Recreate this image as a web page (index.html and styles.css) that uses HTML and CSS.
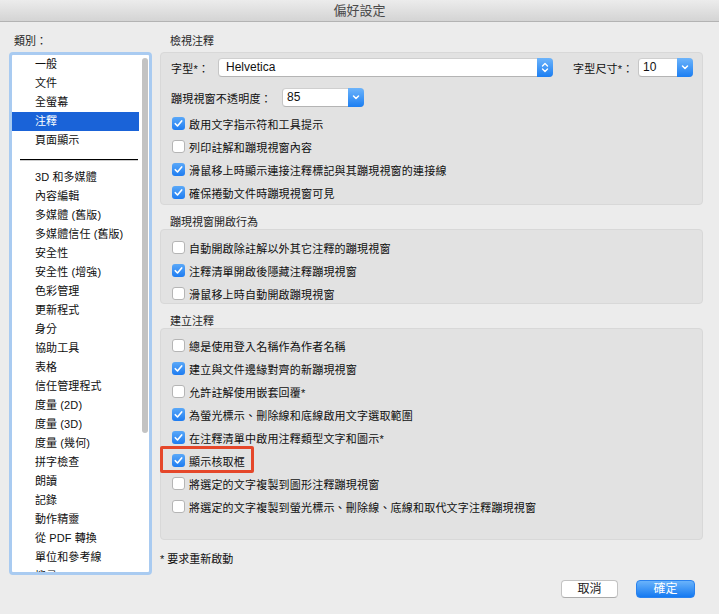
FILE: index.html
```html
<!DOCTYPE html>
<html lang="zh-Hant">
<head>
<meta charset="utf-8">
<title>偏好設定</title>
<link rel="stylesheet" href="styles.css">
</head>
<body>
<div class="window">
  <header class="titlebar">偏好設定</header>
  <div class="content">
    <aside class="sidebar">
      <div class="side-label">類別：</div>
      <div class="list">
        <ul class="items">
          <li>一般</li>
          <li>文件</li>
          <li>全螢幕</li>
          <li class="selected">注釋</li>
          <li>頁面顯示</li>
          <li class="sep"><span class="sep-line"></span></li>
          <li>3D 和多媒體</li>
          <li>內容編輯</li>
          <li>多媒體 (舊版)</li>
          <li>多媒體信任 (舊版)</li>
          <li>安全性</li>
          <li>安全性 (增強)</li>
          <li>色彩管理</li>
          <li>更新程式</li>
          <li>身分</li>
          <li>協助工具</li>
          <li>表格</li>
          <li>信任管理程式</li>
          <li>度量 (2D)</li>
          <li>度量 (3D)</li>
          <li>度量 (幾何)</li>
          <li>拼字檢查</li>
          <li>朗讀</li>
          <li>記錄</li>
          <li>動作精靈</li>
          <li>從 PDF 轉換</li>
          <li>單位和參考線</li>
          <li>搜尋</li>
        </ul>
        <div class="scrollbar"><div class="thumb"></div></div>
      </div>
    </aside>

    <main class="panel">
      <div class="section-title first">檢視注釋</div>
      <section class="group g1">
        <div class="field-row">
          <span class="lbl lbl-font">字型*：</span>
          <div class="select sel-font">
            <span class="val">Helvetica</span>
            <span class="sbtn">
              <svg width="16" height="19" viewBox="0 0 16 19"><path d="M5.5 8 L8 5.5 L10.5 8 M5.5 11 L8 13.5 L10.5 11" fill="none" stroke="#fff" stroke-width="1.4" stroke-linecap="round" stroke-linejoin="round"/></svg>
            </span>
          </div>
          <span class="lbl lbl-size">字型尺寸*：</span>
          <div class="select sel-size">
            <span class="val">10</span>
            <span class="sbtn">
              <svg width="16" height="19" viewBox="0 0 16 19"><path d="M5.5 8 L8 10.5 L10.5 8" fill="none" stroke="#fff" stroke-width="1.5" stroke-linecap="round" stroke-linejoin="round"/></svg>
            </span>
          </div>
        </div>
        <div class="field-row row2">
          <span class="lbl lbl-opacity">蹦現視窗不透明度：</span>
          <div class="select sel-opacity">
            <span class="val">85</span>
            <span class="sbtn">
              <svg width="16" height="19" viewBox="0 0 16 19"><path d="M5.5 8 L8 10.5 L10.5 8" fill="none" stroke="#fff" stroke-width="1.5" stroke-linecap="round" stroke-linejoin="round"/></svg>
            </span>
          </div>
        </div>
        <div class="checks first-checks">
          <div class="check-row"><span class="cb on"><svg width="13" height="13" viewBox="0 0 13 13"><path d="M3.3 6.7 L5.5 9 L9.7 3.9" fill="none" stroke="#fff" stroke-width="1.6" stroke-linecap="round" stroke-linejoin="round"/></svg></span><span class="txt">啟用文字指示符和工具提示</span></div>
          <div class="check-row"><span class="cb"></span><span class="txt">列印註解和蹦現視窗內容</span></div>
          <div class="check-row"><span class="cb on"><svg width="13" height="13" viewBox="0 0 13 13"><path d="M3.3 6.7 L5.5 9 L9.7 3.9" fill="none" stroke="#fff" stroke-width="1.6" stroke-linecap="round" stroke-linejoin="round"/></svg></span><span class="txt">滑鼠移上時顯示連接注釋標記與其蹦現視窗的連接線</span></div>
          <div class="check-row"><span class="cb on"><svg width="13" height="13" viewBox="0 0 13 13"><path d="M3.3 6.7 L5.5 9 L9.7 3.9" fill="none" stroke="#fff" stroke-width="1.6" stroke-linecap="round" stroke-linejoin="round"/></svg></span><span class="txt">確保捲動文件時蹦現視窗可見</span></div>
        </div>
      </section>

      <div class="section-title">蹦現視窗開啟行為</div>
      <section class="group g2">
        <div class="check-row"><span class="cb"></span><span class="txt">自動開啟除註解以外其它注釋的蹦現視窗</span></div>
        <div class="check-row"><span class="cb on"><svg width="13" height="13" viewBox="0 0 13 13"><path d="M3.3 6.7 L5.5 9 L9.7 3.9" fill="none" stroke="#fff" stroke-width="1.6" stroke-linecap="round" stroke-linejoin="round"/></svg></span><span class="txt">注釋清單開啟後隱藏注釋蹦現視窗</span></div>
        <div class="check-row"><span class="cb"></span><span class="txt">滑鼠移上時自動開啟蹦現視窗</span></div>
      </section>

      <div class="section-title">建立注釋</div>
      <section class="group g3">
        <div class="check-row"><span class="cb"></span><span class="txt">總是使用登入名稱作為作者名稱</span></div>
        <div class="check-row"><span class="cb on"><svg width="13" height="13" viewBox="0 0 13 13"><path d="M3.3 6.7 L5.5 9 L9.7 3.9" fill="none" stroke="#fff" stroke-width="1.6" stroke-linecap="round" stroke-linejoin="round"/></svg></span><span class="txt">建立與文件邊緣對齊的新蹦現視窗</span></div>
        <div class="check-row"><span class="cb"></span><span class="txt">允許註解使用嵌套回覆*</span></div>
        <div class="check-row"><span class="cb on"><svg width="13" height="13" viewBox="0 0 13 13"><path d="M3.3 6.7 L5.5 9 L9.7 3.9" fill="none" stroke="#fff" stroke-width="1.6" stroke-linecap="round" stroke-linejoin="round"/></svg></span><span class="txt">為螢光標示、刪除線和底線啟用文字選取範圍</span></div>
        <div class="check-row"><span class="cb on"><svg width="13" height="13" viewBox="0 0 13 13"><path d="M3.3 6.7 L5.5 9 L9.7 3.9" fill="none" stroke="#fff" stroke-width="1.6" stroke-linecap="round" stroke-linejoin="round"/></svg></span><span class="txt">在注釋清單中啟用注釋類型文字和圖示*</span></div>
        <div class="check-row highlighted"><span class="hl"></span><span class="cb on"><svg width="13" height="13" viewBox="0 0 13 13"><path d="M3.3 6.7 L5.5 9 L9.7 3.9" fill="none" stroke="#fff" stroke-width="1.6" stroke-linecap="round" stroke-linejoin="round"/></svg></span><span class="txt">顯示核取框</span></div>
        <div class="check-row"><span class="cb"></span><span class="txt">將選定的文字複製到圖形注釋蹦現視窗</span></div>
        <div class="check-row"><span class="cb"></span><span class="txt">將選定的文字複製到螢光標示、刪除線、底線和取代文字注釋蹦現視窗</span></div>
      </section>

      <div class="footnote">* 要求重新啟動</div>
      <div class="buttons">
        <button class="btn cancel">取消</button>
        <button class="btn ok">確定</button>
      </div>
    </main>
  </div>
</div>
</body>
</html>
```

FILE: styles.css
```css
* { box-sizing: border-box; }

html, body {
  margin: 0;
  padding: 0;
}

body {
  width: 719px;
  height: 614px;
  overflow: hidden;
  background: #ececec;
  font-family: "Liberation Sans", "Noto Sans CJK TC", sans-serif;
  font-size: 11px;
  color: #0f0f0f;
}

.window {
  width: 719px;
  height: 614px;
  background: #ececec;
}

.titlebar {
  height: 22px;
  line-height: 21px;
  text-align: center;
  font-size: 13px;
  color: #4a4a4a;
  background: linear-gradient(#ececec, #d4d4d4);
  border-bottom: 1px solid #b3b3b3;
}

.content {
  display: flex;
  padding-left: 9px;
}

/* ---------- sidebar ---------- */
.sidebar {
  width: 143px;
  flex: none;
}

.side-label {
  margin-top: 12px;
  padding-left: 5px;
  line-height: 14px;
  height: 14px;
  font-size: 11px;
  color: #1a1a1a;
}

.list {
  margin-top: 4px;
  height: 523px;
  border: 3px solid #a9cbf1;
  border-radius: 4px;
  background: #fff;
  display: flex;
  overflow: hidden;
}

.items {
  list-style: none;
  margin: 0;
  padding: 0;
  width: 127px;
  flex: none;
}

.items li {
  height: 19px;
  line-height: 19px;
  padding-left: 23px;
  font-size: 11px;
  letter-spacing: 0.1px;
  color: #0f0f0f;
  white-space: nowrap;
}

.items li.selected {
  background: #1a63d8;
  color: #fff;
}

.items li.sep {
  height: 18px;
  padding: 0 1px 0 8px;
  display: flex;
  align-items: center;
}

.sep-line {
  display: block;
  width: 100%;
  height: 1px;
  background: #000;
  box-shadow: 0 0.5px 0 rgba(0,0,0,0.4);
}

.scrollbar {
  flex: 1;
  padding-top: 3px;
  padding-left: 3px;
}

.thumb {
  width: 6px;
  height: 375px;
  border-radius: 3px;
  background: #c3c3c3;
}

/* ---------- panel ---------- */
.panel {
  margin-left: 8px;
  width: 543px;
  flex: none;
}

.section-title {
  margin-top: 10px;
  padding-left: 10px;
  height: 14px;
  line-height: 14px;
  font-size: 11px;
  color: #262626;
}

.section-title.first {
  margin-top: 12px;
  margin-bottom: 4px;
}

.group {
  background: #e2e2e2;
  border: 1px solid #d8d8d8;
  border-radius: 4px;
  padding-left: 10px;
}

.g1 { padding-top: 5px; padding-bottom: 0; }
.g2 { padding-top: 6px; padding-bottom: 0; height: 75px; }
.g3 { padding-top: 5px; padding-bottom: 21px; }

.field-row {
  display: flex;
  align-items: center;
  height: 19px;
}

.field-row.row2 {
  margin-top: 11px;
}

.lbl {
  flex: none;
  font-size: 11px;
  letter-spacing: 0.2px;
  white-space: nowrap;
}

.lbl-font { width: 47px; }
.lbl-size { width: 65px; margin-left: 20px; }
.lbl-opacity { width: 111px; }

.select {
  flex: none;
  display: flex;
  height: 19px;
  background: #fff;
  border: 1px solid #c6c6c6;
  border-top-color: #cfcfcf;
  border-bottom-color: #b4b4b4;
  border-radius: 4px;
}

.sel-font { width: 335px; }
.sel-size { width: 55px; }
.sel-opacity { width: 82px; }

.select .val {
  flex: 1;
  padding-left: 7px;
  line-height: 17px;
  font-size: 12px;
  color: #111;
}

.sel-size .val, .sel-opacity .val { padding-left: 4px; }

.sbtn {
  flex: none;
  width: 16px;
  height: 19px;
  margin: -1px -1px -1px 0;
  border-radius: 0 4px 4px 0;
  background: linear-gradient(#6db4fb, #1b7ef2);
  display: flex;
  align-items: center;
  justify-content: center;
}

.sbtn svg { display: block; }

.checks.first-checks {
  margin-top: 5px;
}

.check-row {
  position: relative;
  display: flex;
  align-items: center;
  height: 23px;
  padding-left: 1px;
}

.cb {
  flex: none;
  width: 13px;
  height: 13px;
  border-radius: 3px;
  background: #fff;
  border: 1px solid #b5b5b5;
  margin-right: 4px;
  position: relative;
}

.cb.on {
  border: none;
  background: linear-gradient(#5aa8f8, #1e7cf1);
}

.cb svg {
  display: block;
}

.txt {
  font-size: 11px;
  letter-spacing: 0.2px;
  white-space: nowrap;
  color: #0f0f0f;
}

.hl {
  position: absolute;
  left: -11px;
  top: -3px;
  width: 94px;
  height: 27px;
  border: 3px solid #e5472a;
  border-radius: 2px;
}

.footnote {
  margin-top: 12px;
  height: 14px;
  line-height: 14px;
  font-size: 11px;
  color: #0f0f0f;
}

.buttons {
  margin-top: 14px;
  display: flex;
  justify-content: flex-end;
  gap: 18px;
  padding-right: 8px;
}

.btn {
  height: 18px;
  padding: 0;
  border-radius: 4px;
  font-family: "Liberation Sans", "Noto Sans CJK TC", sans-serif;
  font-size: 12px;
  line-height: 16px;
}

.btn.cancel {
  width: 57px;
  background: #fff;
  border: 1px solid #c3c3c3;
  border-bottom-color: #ababab;
  color: #222;
}

.btn.ok {
  width: 59px;
  background: linear-gradient(#6ab3fa, #1479f1);
  border: 1px solid #2a82ee;
  color: #fff;
}
```
